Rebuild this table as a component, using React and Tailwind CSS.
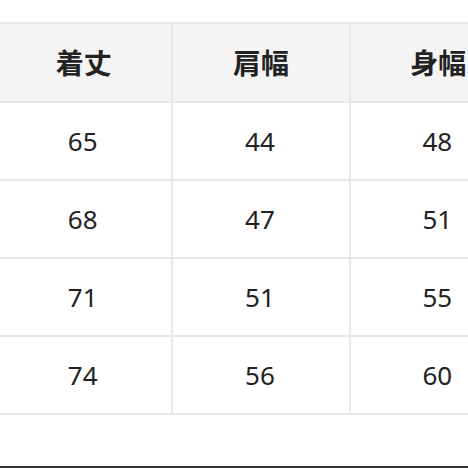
import React from 'react'

const headers = ['着丈', '肩幅', '身幅']
const rows = [
  ['65', '44', '48'],
  ['68', '47', '51'],
  ['71', '51', '55'],
  ['74', '56', '60'],
]

export default function App() {
  return (
    <div
      className="w-[468px] h-[468px] overflow-hidden bg-white flex flex-col text-[#222]"
      style={{ fontFamily: '"Noto Sans", "Noto Sans CJK JP", sans-serif' }}
    >
      <div className="pt-[22px] -ml-[6px]">
        <table className="border-collapse table-fixed w-[534px]">
          <thead>
            <tr className="h-[79px] bg-[#f4f4f4]">
              {headers.map((h) => (
                <th
                  key={h}
                  className="w-[177px] border-2 border-[#e8e8e8] text-[28px] font-bold text-center"
                >
                  {h}
                </th>
              ))}
            </tr>
          </thead>
          <tbody>
            {rows.map((r, i) => (
              <tr key={i} className="h-[78px]">
                {r.map((v, j) => (
                  <td key={j} className="border-2 border-[#e8e8e8] text-[26px] text-center pr-[2px]">
                    {v}
                  </td>
                ))}
              </tr>
            ))}
          </tbody>
        </table>
      </div>
      <div className="flex-1" />
      <div className="h-[2px] bg-[#333]" />
    </div>
  )
}
